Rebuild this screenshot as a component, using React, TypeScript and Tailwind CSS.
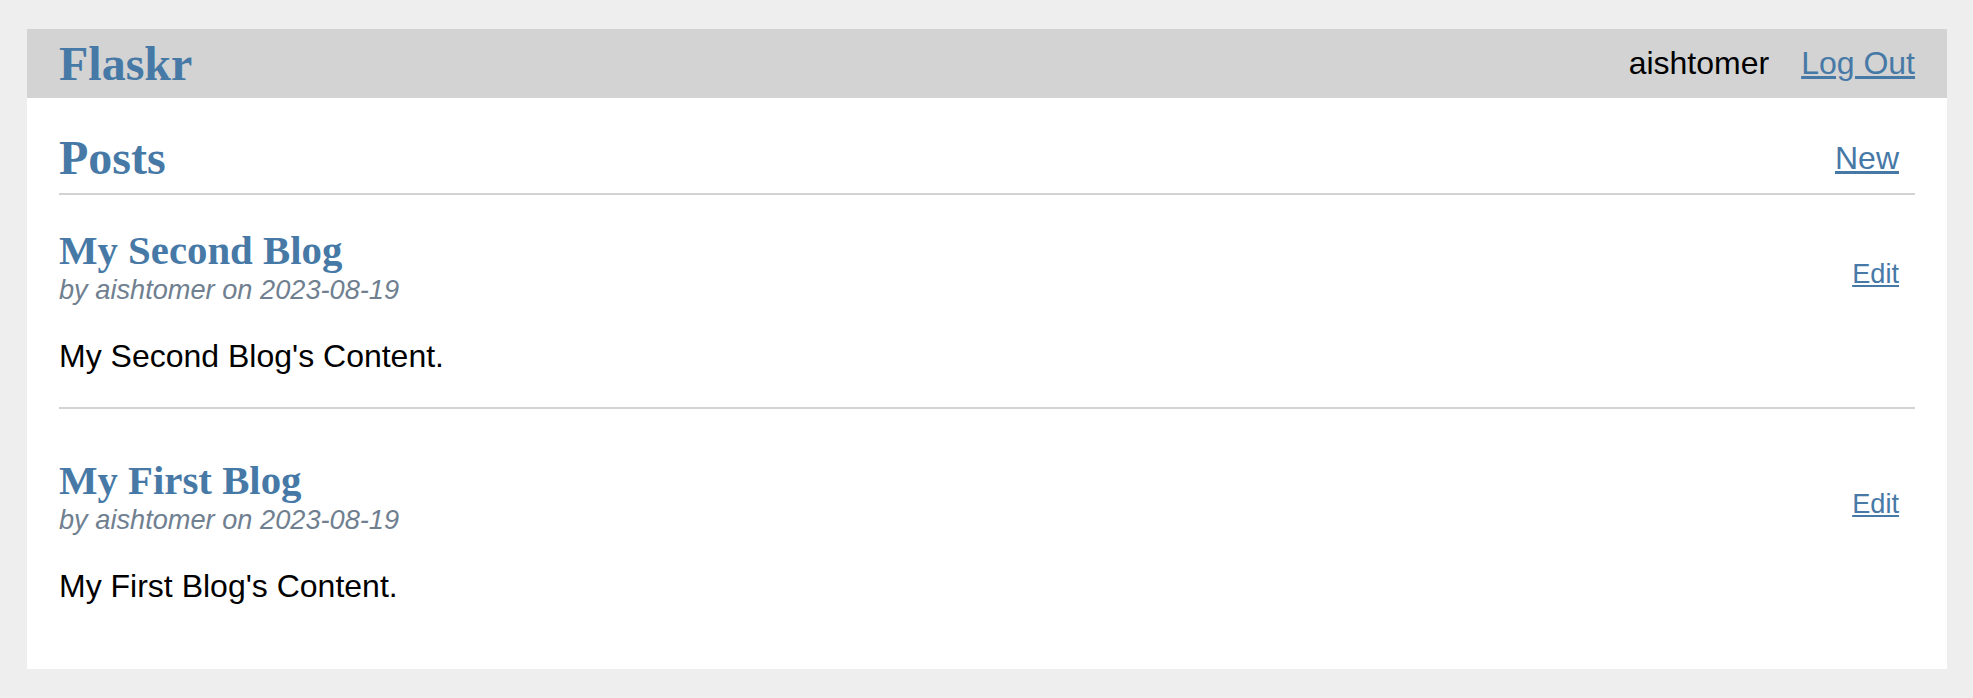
const posts = [
  { id: 2, title: 'My Second Blog', author: 'aishtomer', created: '2023-08-19', body: "My Second Blog's Content." },
  { id: 1, title: 'My First Blog', author: 'aishtomer', created: '2023-08-19', body: "My First Blog's Content." },
];

const serif = "font-['Liberation_Serif','Times_New_Roman',serif]";

export default function App() {
  return (
    <div className="min-h-screen bg-[#eeeeee] pt-[29px] pr-[26px] pb-[31px] pl-[27px] font-['Liberation_Sans',Arial,sans-serif] text-[32px] leading-[normal] text-black">
      <div className="bg-white">
        <nav className="flex items-center bg-[#d3d3d3] px-4">
          <h1 className={`m-0 flex-auto ${serif} text-[48px] font-bold text-[#4779a7]`}>
            <a href="#" className="px-4 py-2 no-underline">
              Flaskr
            </a>
          </h1>
          <ul className="m-0 flex list-none p-0">
            <li>
              <span className="block p-4">aishtomer</span>
            </li>
            <li>
              <a href="#" className="block p-4 text-[#4779a7] underline">
                Log Out
              </a>
            </li>
          </ul>
        </nav>

        <section className="px-8 pb-8">
          <header className="flex items-end border-b-2 border-[#d3d3d3]">
            <h1 className={`mt-8 mb-2 flex-auto ${serif} text-[48px] font-bold text-[#4779a7]`}>Posts</h1>
            <a href="#" className="block p-4 text-[#4779a7] underline">
              New
            </a>
          </header>

          {posts.map((post, i) => (
            <div key={post.id}>
              <article>
                <header className="flex items-end text-[27.2px]">
                  <div className="flex-auto">
                    <h1 className={`mt-8 mb-0 ${serif} text-[40.8px] font-bold text-[#4779a7]`}>{post.title}</h1>
                    <div className="text-[#708090] italic">
                      by {post.author} on {post.created}
                    </div>
                  </div>
                  <a href="#" className="block p-4 text-[#4779a7] underline">
                    Edit
                  </a>
                </header>
                <p className="my-8 whitespace-pre-line">{post.body}</p>
              </article>
              {i < posts.length - 1 && <hr className="my-4 border-0 border-t-2 border-[#d3d3d3]" />}
            </div>
          ))}
        </section>
      </div>
    </div>
  );
}
